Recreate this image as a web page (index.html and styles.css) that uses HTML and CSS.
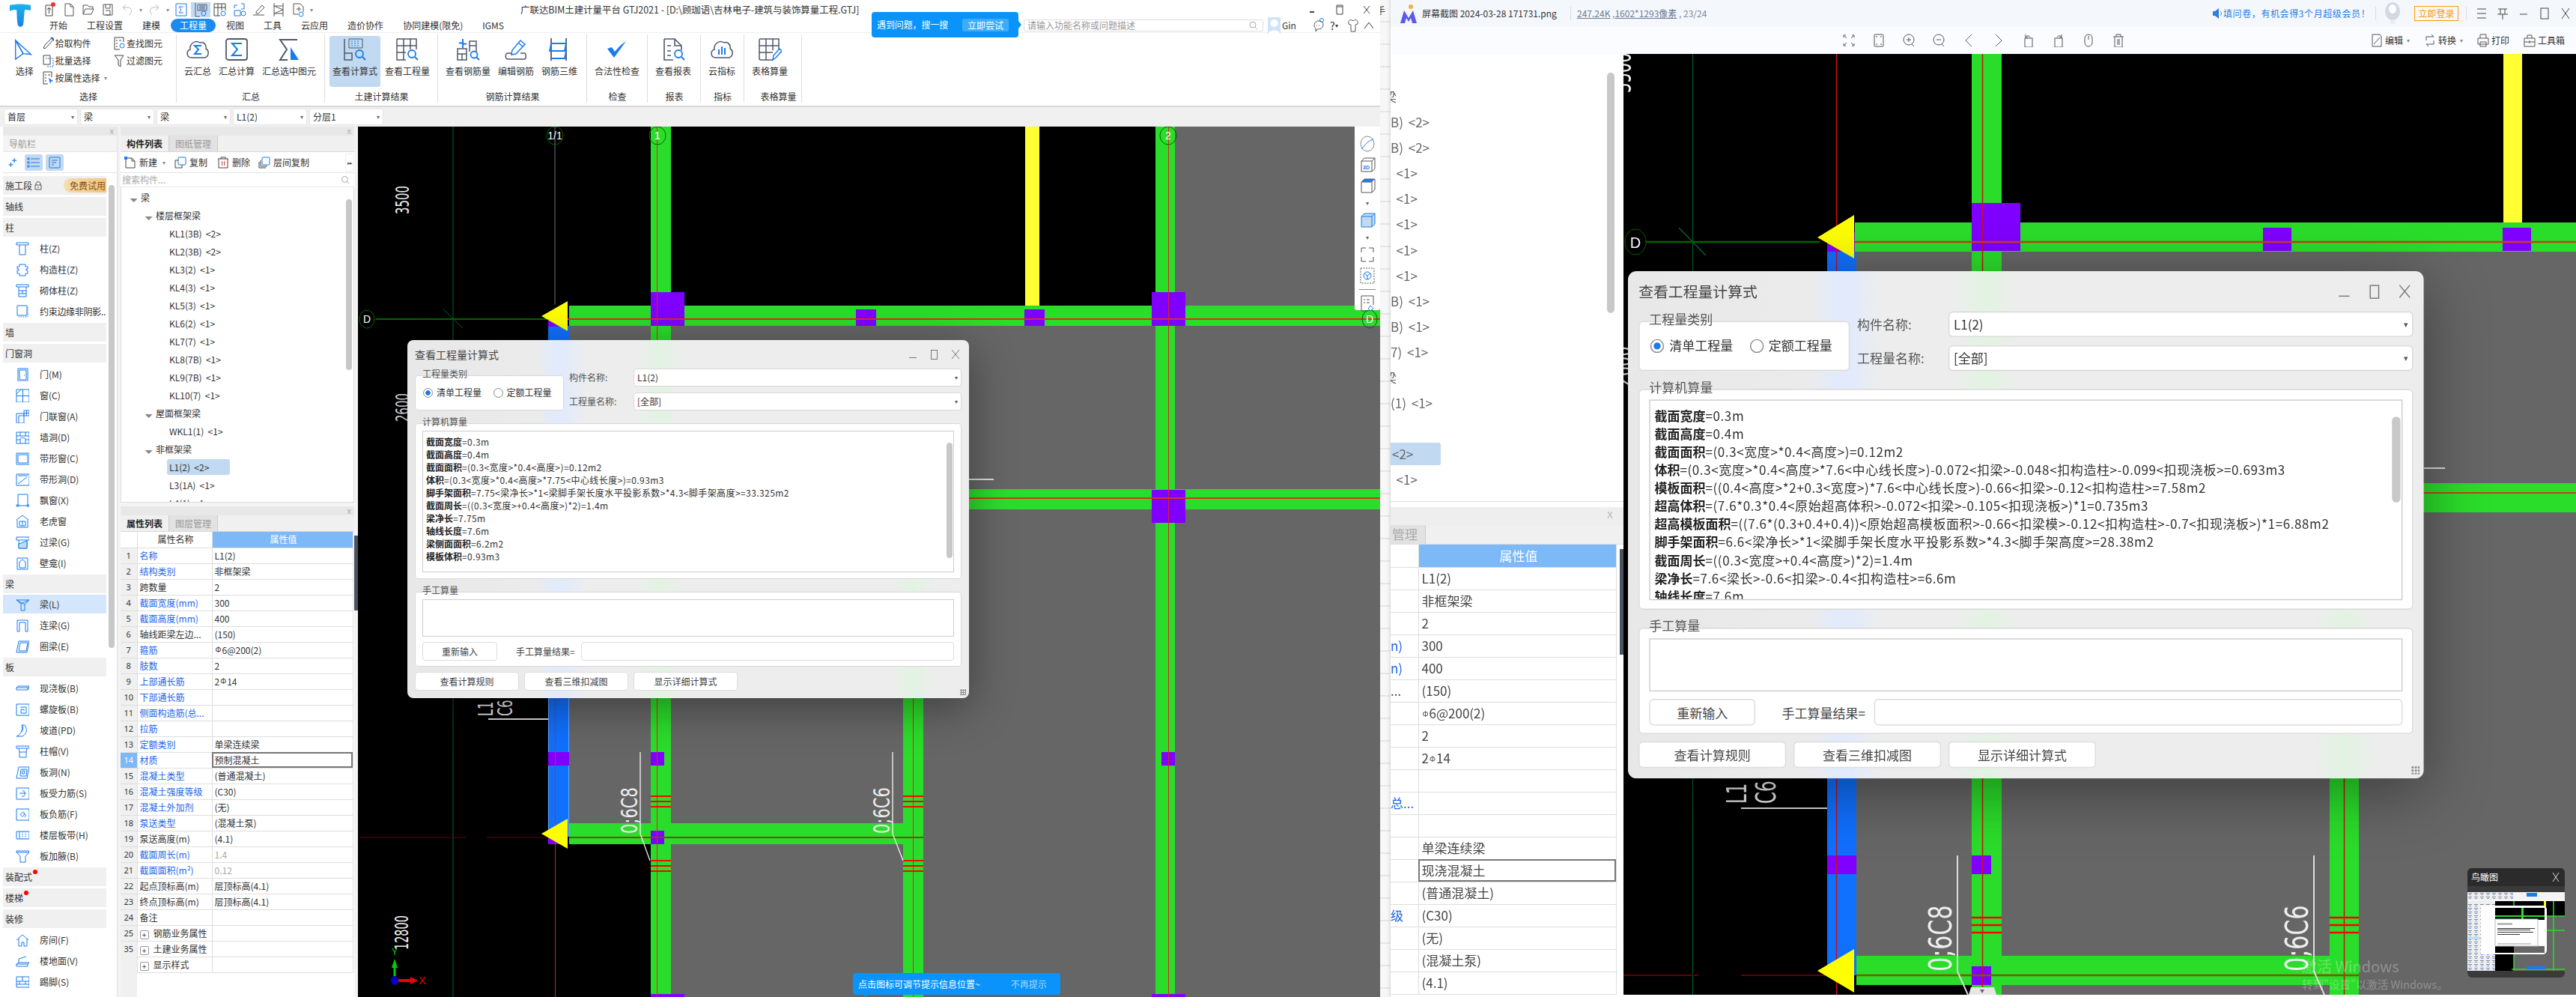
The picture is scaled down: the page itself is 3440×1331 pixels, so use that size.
FILE: index.html
```html
<!DOCTYPE html>
<html lang="zh-CN">
<head>
<meta charset="utf-8">
<title>GTJ2021</title>
<link rel="stylesheet" href="styles.css">
</head>
<body>
<div class="desktop">

<!-- ============ GTJ application window ============ -->
<section class="gtj">
  <header class="head">
    <svg class="logo" viewBox="0 0 30 32"><defs><linearGradient id="lg" x1="0" y1="0" x2="0" y2="1"><stop offset="0" stop-color="#19b4e8"/><stop offset="1" stop-color="#1f7fe8"/></linearGradient></defs><path d="M1 2c9-2 19-2 28 0v7c-4-1-6-1-8-1-1 7-1 14-2 20-1 3-5 4-7 1C10 22 11 15 10 8 7 8 4 8 1 10z" fill="url(#lg)"/></svg>
    <div class="head-right">
      <div class="title-row">
        <div class="quick">
          <svg class="qi" viewBox="0 0 26 20"><path d="M8 4h9v14H8z M12.5 15V8 M10 10l2.500-3 2.500 3" fill="none" stroke="#444"/><circle cx="18" cy="3" r="3" fill="#e33"/></svg>
          <svg class="qi" viewBox="0 0 26 20"><path d="M8 2h7l4 4v12H8z M15 2v4h4" fill="none" stroke="#555"/></svg>
          <svg class="qi" viewBox="0 0 26 20"><path d="M6 16V4h6l2 2h5v3 M6 16l3-7h11l-3 7z" fill="none" stroke="#555"/></svg>
          <svg class="qi" viewBox="0 0 26 20"><path d="M7 3h12v14H7z M10 3v5h6V3 M10 11h6v6h-6" fill="none" stroke="#555"/></svg>
          <svg class="qi" viewBox="0 0 26 20"><path d="M16 17c4-4 3-10-2-10H8 M11 3L7 7l4 4" fill="none" stroke="#bbb"/></svg>
          <i class="qc">▾</i>
          <svg class="qi" viewBox="0 0 26 20"><path d="M10 17C6 13 7 7 12 7h6 M15 3l4 4-4 4" fill="none" stroke="#bbb"/></svg>
          <i class="qc">▾</i>
          <svg class="qi" viewBox="0 0 26 20"><path d="M6 2h14v16H6z M16 6H10l3 4-3 4h6" fill="none" stroke="#1a7bec"/></svg>
          <svg class="qi qon" viewBox="0 0 26 20"><path d="M6 1v18h6 M9 3h12v8H9z M11 5h8 M11 7h8 M11 9h8" fill="none" stroke="#55607a"/><circle cx="17" cy="15" r="3" fill="none" stroke="#1a7bec"/></svg>
          <svg class="qi" viewBox="0 0 26 20"><path d="M5 2h15v9 M5 2v16h8 M5 7h15 M10 2v16 M15 2v9" fill="none" stroke="#444"/><circle cx="17" cy="15" r="3" fill="none" stroke="#1a7bec"/></svg>
          <svg class="qi" viewBox="0 0 26 20"><path d="M6 8V4h4 M6 11h8v7H6z M15 2h4v7h-4" fill="none" stroke="#1a7bec"/><circle cx="18" cy="15" r="3" fill="none" stroke="#1a7bec"/></svg>
          <svg class="qi" viewBox="0 0 26 20"><path d="M5 17h15 M9 13l8-9 3 3-8 8H9z" fill="none" stroke="#555"/></svg>
          <svg class="qi" viewBox="0 0 26 20"><path d="M7 1v18 M19 1v18 M7 5h12 M7 15h12 M7 5l12 5-12 5" fill="none" stroke="#555"/></svg>
          <svg class="qi" viewBox="0 0 26 20"><path d="M7 2h9l4 4v7 M7 2v14h6 M11 9h6 M14 6v6" fill="none" stroke="#555"/><circle cx="17" cy="16" r="3" fill="none" stroke="#1a7bec"/></svg>
          <i class="qc">▾</i>
        </div>
        <div class="app-title">广联达BIM土建计量平台 GTJ2021 - [D:\顾珈语\吉林电子-建筑与装饰算量工程.GTJ]</div>
        <div class="win-btns">
          <span class="wb"><svg viewBox="0 0 14 14" width="14" height="14"><path d="M3 10h6" stroke="#444" stroke-width="2"/></svg></span>
          <span class="wb"><svg viewBox="0 0 14 14" width="14" height="14"><path d="M3 1h8v12H3z M3 3h8" stroke="#444" fill="none"/></svg></span>
          <span class="wb"><svg viewBox="0 0 14 14" width="14" height="14"><path d="M3 2l8 10M11 2l-8 10" stroke="#444" fill="none"/></svg></span>
        </div>
      </div>
      <div class="tab-row">
        <nav class="tabs">
          <span>开始</span><span>工程设置</span><span>建模</span><span class="on">工程量</span><span>视图</span><span>工具</span><span>云应用</span><span>造价协作</span><span>协同建模(限免)</span><span>IGMS</span>
        </nav>
        <div class="help">
          <div class="search"><span>请输入功能名称或问题描述</span><svg viewBox="0 0 12 12" width="12" height="12"><circle cx="5" cy="5" r="4" fill="none" stroke="#aaa"/><path d="M8 8l3 3" stroke="#aaa"/></svg></div>
          <svg class="avatar" viewBox="0 0 17 22"><rect width="17" height="22" fill="#cfe4fb"/><circle cx="8.500" cy="8" r="5" fill="#fff"/><path d="M1 22c1-6 14-6 15 0z" fill="#fff"/></svg>
          <span class="user">Gin</span>
          <svg class="hi first" viewBox="0 0 18 20"><path d="M3 10c0-8 12-8 12-1 0 5-5 6-8 6l-2 3v-4c-1-1-2-2-2-4z M6 10h1 M9 10h1" fill="none" stroke="#555"/><circle cx="13" cy="3" r="2.500" fill="none" stroke="#1a7bec"/></svg>
          <span class="qm">?<i>▾</i></span>
          <svg class="hi" viewBox="0 0 18 20"><path d="M6 2C4 3 2 4 3 8l3 1v9h6V9l3-1c1-4-1-5-3-6-1 2-5 2-6 0z" fill="none" stroke="#555"/></svg>
          <svg class="hi" viewBox="0 0 18 20"><path d="M3 14l6-8 6 8" fill="none" stroke="#333"/></svg>
        </div>
      </div>
    </div>
    <div class="try-tip"><span>遇到问题，搜一搜</span><b>立即尝试</b></div>
  </header>

  <section class="ribbon">
    <div class="rg g1">
      <div class="rg-body">
        <div class="big-sel">
          <svg class="ric" viewBox="0 0 24 30"><path d="M1 2l22 20-11-1z" fill="none" stroke="#1a7bec" stroke-width="1.500"/><path d="M1 2v27l11-8z" fill="none" stroke="#1a7bec" stroke-width="1.500"/></svg>
          <span class="lab">选择</span>
        </div>
        <div class="small-col">
          <div class="sm"><svg viewBox="0 0 16 18"><path d="M14 1l2 2-9 10-3 3-2-1 2-4z" fill="none" stroke="#444"/><path d="M12 1l4 4" stroke="#1a7bec" stroke-width="2"/></svg><span>拾取构件</span></div>
          <div class="sm"><svg viewBox="0 0 16 18"><path d="M2 2h9v12H2z" fill="none" stroke="#444"/><path d="M5 6h10v11H7" fill="none" stroke="#1a7bec" stroke-dasharray="2 1"/></svg><span>批量选择</span></div>
          <div class="sm"><svg viewBox="0 0 16 18"><path d="M2 1h11v7 M2 1v16h6 M4 5h2 M8 5h3 M4 9h2 M4 13h2" fill="none" stroke="#444"/><path d="M9 9l6 4-3 1-1 3z" fill="#1a7bec"/></svg><span>按属性选择</span><i class="cr">▾</i></div>
        </div>
        <div class="small-col second">
          <div class="sm"><svg viewBox="0 0 16 18"><path d="M1 1h12v6 M1 1v16h7 M3 5h2 M7 5h3 M3 9h2 M3 13h2" fill="none" stroke="#444"/><circle cx="11" cy="12" r="3" fill="none" stroke="#1a7bec"/></svg><span>查找图元</span></div>
          <div class="sm"><svg viewBox="0 0 16 18"><path d="M1 2h12L9 8v9L6 15V8z" fill="none" stroke="#444"/></svg><span>过滤图元</span></div>
        </div>
      </div>
      <div class="rg-lab">选择</div>
    </div>

    <div class="rg g2">
      <div class="rg-body tall">
        <div class="rb"><svg class="ric" viewBox="0 0 32 30"><path d="M8 26C1 26 0 17 6 15 5 7 13 2 19 6c5-2 9 3 8 8 5 3 4 12-3 12z" fill="none" stroke="#50586a" stroke-width="1.500"/><path d="M21 10h-9l5 5-5 6h9" fill="none" stroke="#1a7bec" stroke-width="2"/></svg><span class="lab">云汇总</span></div>
        <div class="rb"><svg class="ric" viewBox="0 0 32 30"><rect x="2" y="1" width="28" height="28" rx="3" fill="none" stroke="#50586a" stroke-width="1.800"/><path d="M23 7H10l7 8-7 8h13" fill="none" stroke="#1a7bec" stroke-width="2"/></svg><span class="lab">汇总计算</span></div>
        <div class="rb"><svg class="ric" viewBox="0 0 32 30"><path d="M27 2H4l9 13-9 14h10" fill="none" stroke="#50586a" stroke-width="2"/><path d="M18 12l11 17H18z" fill="#1a7bec"/></svg><span class="lab">汇总选中图元</span></div>
      </div>
      <div class="rg-lab">汇总</div>
    </div>

    <div class="rg g3">
      <div class="rg-body tall">
        <div class="rb sel"><svg class="ric" viewBox="0 0 32 30"><path d="M2 1v28h10v-9H2" fill="none" stroke="#50586a" stroke-width="1.500"/><path d="M8 1h18v12H8z" fill="#c1d9f1" stroke="#50586a"/><path d="M11 4h2M15 4h2M19 4h2M11 7h2M15 7h2M19 7h2M11 10h2M15 10h2M19 10h2" stroke="#1a7bec"/><circle cx="22" cy="21" r="5" fill="none" stroke="#1a7bec" stroke-width="1.800"/><path d="M26 25l4 4" stroke="#1a7bec" stroke-width="2"/></svg><span class="lab">查看计算式</span></div>
        <div class="rb"><svg class="ric" viewBox="0 0 32 30"><path d="M2 1h26v14 M2 1v28h12 M2 10h26 M2 19h12 M11 1v28 M20 1v14" fill="none" stroke="#50586a" stroke-width="1.500"/><circle cx="22" cy="21" r="5" fill="none" stroke="#1a7bec" stroke-width="1.800"/><path d="M26 25l4 4" stroke="#1a7bec" stroke-width="2"/></svg><span class="lab">查看工程量</span></div>
      </div>
      <div class="rg-lab">土建计算结果</div>
    </div>

    <div class="rg g4">
      <div class="rg-body tall">
        <div class="rb"><svg class="ric" viewBox="0 0 32 30"><path d="M18 18V4h9v14 M18 10h9 M2 14v15h12V14z M2 21h12 M8 21v8" fill="none" stroke="#50586a" stroke-width="1.500"/><path d="M9 1v12 M4 7c3-3 7 3 10 0" fill="none" stroke="#1a7bec" stroke-width="2"/><circle cx="24" cy="22" r="4.500" fill="none" stroke="#1a7bec" stroke-width="1.800"/><path d="M27 25l4 4" stroke="#1a7bec" stroke-width="2"/></svg><span class="lab">查看钢筋量</span></div>
        <div class="rb"><svg class="ric" viewBox="0 0 32 30"><path d="M10 20H6c-5 0-5 8 0 8h21c3 0 3-8 0-8h-5" fill="none" stroke="#50586a" stroke-width="1.500"/><path d="M10 22l1-6L22 3l6 5-12 13z M19 6l6 5" fill="none" stroke="#1a7bec" stroke-width="1.500"/></svg><span class="lab">编辑钢筋</span></div>
        <div class="rb"><svg class="ric" viewBox="0 0 32 30"><path d="M5 0v30 M25 0v30" stroke="#50586a" stroke-width="1.800"/><path d="M5 7h20l-2 10H3z M5 17h20l-2 10H5" fill="none" stroke="#1a7bec" stroke-width="1.800"/></svg><span class="lab">钢筋三维</span></div>
      </div>
      <div class="rg-lab">钢筋计算结果</div>
    </div>

    <div class="rg g5">
      <div class="rg-body tall">
        <div class="rb"><svg class="ric" viewBox="0 0 32 30"><path d="M3 14l9 12L28 4c-8 5-12 11-15 14l-4-6z" fill="#1a7bec"/></svg><span class="lab">合法性检查</span></div>
      </div>
      <div class="rg-lab">检查</div>
    </div>

    <div class="rg g6">
      <div class="rg-body tall">
        <div class="rb"><svg class="ric" viewBox="0 0 32 30"><path d="M4 1h14l9 9v6 M18 1v9h9 M4 1v28h12 M8 10h5 M8 17h5 M8 23h5" fill="none" stroke="#50586a" stroke-width="1.600"/><circle cx="23" cy="21" r="5" fill="none" stroke="#1a7bec" stroke-width="1.800"/><path d="M27 25l4 4" stroke="#1a7bec" stroke-width="2"/></svg><span class="lab">查看报表</span></div>
      </div>
      <div class="rg-lab">报表</div>
    </div>

    <div class="rg g7">
      <div class="rg-body tall">
        <div class="rb"><svg class="ric" viewBox="0 0 32 30"><path d="M8 26C1 26 0 17 6 15 5 7 13 2 19 6c5-2 9 3 8 8 5 3 4 12-3 12z" fill="none" stroke="#50586a" stroke-width="1.500"/><path d="M12 15v7 M16 11v11 M20 13v9" stroke="#1a7bec" stroke-width="2"/></svg><span class="lab">云指标</span></div>
      </div>
      <div class="rg-lab">指标</div>
    </div>

    <div class="rg g8">
      <div class="rg-body tall">
        <div class="rb"><svg class="ric" viewBox="0 0 32 30"><path d="M3 1h25v15 M3 1c-1 0-1 1-1 2v24c0 1 1 2 2 2h16 M2 10h26 M2 19h18 M11 1v28 M20 1v15" fill="none" stroke="#50586a" stroke-width="1.500"/><path d="M20 29l1-6 8-9 3 3-8 9z" fill="none" stroke="#1a7bec" stroke-width="1.500"/></svg><span class="lab">表格算量</span></div>
      </div>
      <div class="rg-lab shift">表格算量</div>
    </div>
  </section>

  <div class="combo-row">
    <div class="combo">首层<i>▾</i></div>
    <div class="combo">梁<i>▾</i></div>
    <div class="combo">梁<i>▾</i></div>
    <div class="combo">L1(2)<i>▾</i></div>
    <div class="combo">分层1<i>▾</i></div>
  </div>

  <div class="work">
    <!-- navigation -->
    <aside class="nav">
      <div class="strip"><span>x</span></div>
      <div class="nav-title">导航栏</div>
      <div class="nav-tools">
        <svg class="nt-plus" viewBox="0 0 12 12" width="14" height="14"><path d="M7 1v5M4.500 3.500h5M3 6v5M.5 8.500h5" stroke="#1a7bec" fill="none"/></svg>
        <span class="nt on"><svg viewBox="0 0 18 16" width="18" height="16"><path d="M5 3h12M5 8h12M5 13h12" stroke="#1a7bec"/><rect x="1" y="2" width="2" height="2" fill="none" stroke="#1a7bec"/><rect x="1" y="7" width="2" height="2" fill="none" stroke="#1a7bec"/><rect x="1" y="12" width="2" height="2" fill="none" stroke="#1a7bec"/></svg></span>
        <span class="nt on"><svg viewBox="0 0 18 16" width="18" height="16"><rect x="2" y="1" width="14" height="14" rx="1" fill="none" stroke="#1a7bec"/><path d="M5 5h8M5 8h6M5 11h3" stroke="#1a7bec"/></svg></span>
      </div>
      <div class="nav-list">
        <div class="sec">施工段<svg class="lock" viewBox="0 0 10 12" width="10" height="12"><path d="M2 5V3c0-3 6-3 6 0v2 M1 5h8v6H1z M5 7v2" fill="none" stroke="#555"/></svg><b class="free">免费试用</b></div>
        <div class="sec">轴线</div>
        <div class="sec">柱</div>
        <div class="items">
          <div class="it"><svg viewBox="0 0 18 18"><path d="M1 1h16v3H1z M5 4v13h8V4"/></svg>柱(Z)</div>
          <div class="it"><svg viewBox="0 0 18 18"><path d="M5 2h8v3h3v3h-2v2h2v4h-3v3H5v-3H2v-4h2V8H2V5h3z"/></svg>构造柱(Z)</div>
          <div class="it"><svg viewBox="0 0 18 18"><path d="M1 1h16v3H1z M4 4v13h10V4 M4 9h10 M9 9v4 M4 13h10"/></svg>砌体柱(Z)</div>
          <div class="it"><svg viewBox="0 0 18 18"><path d="M2 1h13v13H2z"/><path d="M16 3v13H4" stroke-dasharray="1.500 1.500"/></svg><span class="clip">约束边缘非阴影..</span></div>
        </div>
        <div class="sec">墙</div>
        <div class="sec">门窗洞</div>
        <div class="items">
          <div class="it"><svg viewBox="0 0 18 18"><path d="M3 1h13v17H3z M5 3h9v13H5z M11 10h1"/></svg>门(M)</div>
          <div class="it"><svg viewBox="0 0 18 18"><path d="M1 1h17v17H1z M9.500 1v17 M1 9.500h17 M1 7l6-6"/></svg>窗(C)</div>
          <div class="it"><svg viewBox="0 0 18 18"><path d="M1 5h10v13H1z M4 18V8h7 M11 1h7v7h-7z M14.500 1v7 M11 4.500h7"/></svg>门联窗(A)</div>
          <div class="it"><svg viewBox="0 0 18 18"><path d="M1 2h17v15H1z M1 7h17 M6 2v5 M13 2v5 M1 12h5 M13 12h5 M6 17v-6c0-2 7-2 7 0v6"/></svg>墙洞(D)</div>
          <div class="it"><svg viewBox="0 0 18 18"><path d="M1 2h17v15H1z M3 4h13v11H3z"/></svg>带形窗(C)</div>
          <div class="it"><svg viewBox="0 0 18 18"><path d="M1 2h17v15H1z M3 15L15 6 M3 4h13"/></svg>带形洞(D)</div>
          <div class="it"><svg viewBox="0 0 18 18"><path d="M3 1h13v15H3z M1 15h3v2H1z M15 15h3v2h-3z"/></svg>飘窗(X)</div>
          <div class="it"><svg viewBox="0 0 18 18"><path d="M1 7l8-6 8 6 M2 7v10h14V7 M5 9h8v6H5z M9 9v6"/></svg>老虎窗</div>
          <div class="it"><svg viewBox="0 0 18 18"><path d="M1 2h17v4H1z M4 6v11h11V6"/><path d="M4 11l11-4v10H4z" class="tint"/></svg>过梁(G)</div>
          <div class="it"><svg viewBox="0 0 18 18"><path d="M2 2h14v15H2z M5 15V7l4-3 4 3v8z"/></svg>壁龛(I)</div>
        </div>
        <div class="sec">梁</div>
        <div class="items">
          <div class="it sel"><svg viewBox="0 0 18 18"><path d="M1 3h17l-6 6v8H7V8z M1 3l11 6 M18 3L7 8"/></svg>梁(L)</div>
          <div class="it"><svg viewBox="0 0 18 18"><path d="M2 17V2h14v15h-3V5H5v12z"/></svg>连梁(G)</div>
          <div class="it"><svg viewBox="0 0 18 18"><path d="M4 2h14l-3 15H1z M6 4h10l-2 11H4z"/></svg>圈梁(E)</div>
        </div>
        <div class="sec">板</div>
        <div class="items">
          <div class="it"><svg viewBox="0 0 18 18"><path d="M1 8l2-2h15v3l-2 2H1z M1 8h15v3 M16 8l2-2"/></svg>现浇板(B)</div>
          <div class="it"><svg viewBox="0 0 18 18"><path d="M1 2h17v15H1z M6 6h8v8H7V9h4v2"/></svg>螺旋板(B)</div>
          <div class="it"><svg viewBox="0 0 18 18"><path d="M1 17c6-2 9-9 7-15h4c4 6 3 11-3 15z M8 2c3 1 2 6 0 9"/></svg>坡道(PD)</div>
          <div class="it"><svg viewBox="0 0 18 18"><path d="M1 2h17v3H1z M4 5l1 5h9l1-5 M5 10v7h9v-7"/></svg>柱帽(V)</div>
          <div class="it"><svg viewBox="0 0 18 18"><path d="M4 2h14l-3 15H1z M7 5h8l-1 9H6z M9 7h3l-.5 4h-3z"/></svg>板洞(N)</div>
          <div class="it"><svg viewBox="0 0 18 18"><path d="M1 2h17v15H1z M5 9h9 M9 6c3-1 4 2 2 3 3 1 1 5-3 4"/></svg>板受力筋(S)</div>
          <div class="it"><svg viewBox="0 0 18 18"><path d="M1 2h17v15H1z M6 10c3-6 6-4 5 0-1 3-4 2-4 0 M11 8c2 0 3 3 1 5"/></svg>板负筋(F)</div>
          <div class="it"><svg viewBox="0 0 18 18"><path d="M1 4h17v10H1z M5 4v10"/><path d="M9 4v10 M13 4v10" stroke-dasharray="1.500 1.500"/></svg>楼层板带(H)</div>
          <div class="it"><svg viewBox="0 0 18 18"><path d="M1 2h17v2l-5 5v8H6V9L1 4z M1 4h17"/></svg>板加腋(B)</div>
        </div>
        <div class="sec">装配式<i class="dot"></i></div>
        <div class="sec">楼梯<i class="dot"></i></div>
        <div class="sec">装修</div>
        <div class="items">
          <div class="it"><svg viewBox="0 0 18 18"><path d="M1 9l8-7 8 7 M4 7v10h4v-5h3v5h4V7"/></svg>房间(F)</div>
          <div class="it"><svg viewBox="0 0 18 18"><path d="M1 13h15l2-2H4z M1 13v3h15v-3 M4 11V6l10-3"/></svg>楼地面(V)</div>
          <div class="it"><svg viewBox="0 0 18 18"><path d="M1 2h17v14H1z M1 8h17 M9 2v6 M5 8v4 M13 8v4 M1 12h17" /></svg>踢脚(S)</div>
        </div>
      </div>
      <i class="nav-scroll"></i>
    </aside>

    <!-- component list + properties -->
    <div class="mid">
      <div class="list-panel">
        <div class="strip"><span>x</span></div>
        <div class="ptabs"><span class="on">构件列表</span><span>图纸管理</span></div>
        <div class="ltools">
          <span class="lt w1"><svg viewBox="0 0 16 16" width="16" height="16"><path d="M2 2h8l4 4v9H2z M10 2v4h4" fill="none" stroke="#444"/><rect x="0" y="0" width="4" height="4" fill="#1a7bec"/></svg>新建<i>▾</i></span>
          <span class="lt w2"><svg viewBox="0 0 16 16" width="16" height="16"><rect x="5" y="1" width="10" height="10" rx="1" fill="none" stroke="#1a7bec"/><path d="M5 5H1v10h9v-4" fill="none" stroke="#444"/></svg>复制</span>
          <span class="lt w3"><svg viewBox="0 0 16 16" width="16" height="16"><path d="M1 3h14 M5 3V1h6v2 M2 3v12h12V3" fill="none" stroke="#444"/><path d="M6.500 6v6M9.500 6v6" stroke="#e33"/></svg>删除</span>
          <span class="lt w4"><svg viewBox="0 0 16 16" width="16" height="16"><rect x="5" y="1" width="10" height="10" rx="1" fill="none" stroke="#1a7bec"/><path d="M3 5v8h9 M1 7v8h9" fill="none" stroke="#444"/></svg>层间复制</span>
          <span class="more">▸▸</span>
        </div>
        <div class="lsearch"><span>搜索构件...</span><svg viewBox="0 0 12 12" width="12" height="12"><circle cx="5.500" cy="5.500" r="4" fill="none" stroke="#aaa"/><path d="M8 8l3 3" stroke="#aaa"/></svg></div>
        <div class="tree">
          <div class="tr l0"><i>◢</i>梁</div>
          <div class="tr l1"><i>◢</i>楼层框架梁</div>
          <div class="tr l2">KL1(3B) &nbsp;&lt;2&gt;</div>
          <div class="tr l2">KL2(3B) &nbsp;&lt;2&gt;</div>
          <div class="tr l2">KL3(2) &nbsp;&lt;1&gt;</div>
          <div class="tr l2">KL4(3) &nbsp;&lt;1&gt;</div>
          <div class="tr l2">KL5(3) &nbsp;&lt;1&gt;</div>
          <div class="tr l2">KL6(2) &nbsp;&lt;1&gt;</div>
          <div class="tr l2">KL7(7) &nbsp;&lt;1&gt;</div>
          <div class="tr l2">KL8(7B) &nbsp;&lt;1&gt;</div>
          <div class="tr l2">KL9(7B) &nbsp;&lt;1&gt;</div>
          <div class="tr l2">KL10(7) &nbsp;&lt;1&gt;</div>
          <div class="tr l1"><i>◢</i>屋面框架梁</div>
          <div class="tr l2">WKL1(1) &nbsp;&lt;1&gt;</div>
          <div class="tr l1"><i>◢</i>非框架梁</div>
          <div class="tr l2"><span class="pill">L1(2) &nbsp;&lt;2&gt;</span></div>
          <div class="tr l2">L3(1A) &nbsp;&lt;1&gt;</div>
          <div class="tr l2">L4(1) &nbsp;&lt;1&gt;</div>
          <i class="tree-scroll"></i>
        </div>
      </div>
      <div class="prop-panel">
        <div class="strip"><span>x</span></div>
        <div class="ptabs"><span class="on">属性列表</span><span>图层管理</span></div>
        <table class="props">
          <colgroup><col class="c1"><col class="c2"><col class="c3"></colgroup>
          <tr class="ph"><th></th><th>属性名称</th><th class="pv">属性值</th></tr>
          <tr><td>1</td><td class="bl">名称</td><td>L1(2)</td></tr>
          <tr><td>2</td><td class="bl">结构类别</td><td>非框架梁</td></tr>
          <tr><td>3</td><td>跨数量</td><td>2</td></tr>
          <tr><td>4</td><td class="bl">截面宽度(mm)</td><td>300</td></tr>
          <tr><td>5</td><td class="bl">截面高度(mm)</td><td>400</td></tr>
          <tr><td>6</td><td>轴线距梁左边...</td><td>(150)</td></tr>
          <tr><td>7</td><td class="bl">箍筋</td><td><span class="rb-s">Φ</span>6@200(2)</td></tr>
          <tr><td>8</td><td class="bl">肢数</td><td>2</td></tr>
          <tr><td>9</td><td class="bl">上部通长筋</td><td>2<span class="rb-s">Φ</span>14</td></tr>
          <tr><td>10</td><td class="bl">下部通长筋</td><td></td></tr>
          <tr><td>11</td><td class="bl">侧面构造筋(总...</td><td></td></tr>
          <tr><td>12</td><td class="bl">拉筋</td><td></td></tr>
          <tr><td>13</td><td class="bl">定额类别</td><td>单梁连续梁</td></tr>
          <tr><td class="cur">14</td><td class="bl">材质</td><td class="edit">预制混凝土</td></tr>
          <tr><td>15</td><td class="bl">混凝土类型</td><td>(普通混凝土)</td></tr>
          <tr><td>16</td><td class="bl">混凝土强度等级</td><td>(C30)</td></tr>
          <tr><td>17</td><td class="bl">混凝土外加剂</td><td>(无)</td></tr>
          <tr><td>18</td><td class="bl">泵送类型</td><td>(混凝土泵)</td></tr>
          <tr><td>19</td><td>泵送高度(m)</td><td>(4.1)</td></tr>
          <tr><td>20</td><td class="bl">截面周长(m)</td><td class="gr">1.4</td></tr>
          <tr><td>21</td><td class="bl">截面面积(m²)</td><td class="gr">0.12</td></tr>
          <tr><td>22</td><td>起点顶标高(m)</td><td>层顶标高(4.1)</td></tr>
          <tr><td>23</td><td>终点顶标高(m)</td><td>层顶标高(4.1)</td></tr>
          <tr><td>24</td><td>备注</td><td></td></tr>
          <tr><td>25</td><td><i class="plus">+</i>钢筋业务属性</td><td></td></tr>
          <tr><td>35</td><td><i class="plus">+</i>土建业务属性</td><td></td></tr>
          <tr><td>45</td><td><i class="plus">+</i>显示样式</td><td></td></tr>
        </table>
        <i class="prop-scroll"></i>
      </div>
    </div>

    <!-- CAD canvas -->
    <div class="canvas">
      <svg class="cad" viewBox="478 169 1365 1162">
        <rect x="478" y="169" width="1365" height="1162" fill="#000"/>
        <rect x="1569" y="169" width="274" height="1162" fill="#666"/>
        <rect x="760" y="435" width="810" height="896" fill="#666"/>
        <rect x="760" y="1127" width="109" height="204" fill="#000"/>
        <path d="M605 169v1162" stroke="#063" stroke-width="1"/>
        <path d="M741 169v238" stroke="#777"/>
        <path d="M592 413l26 25" stroke="#063"/>
        <path d="M502 426h228" stroke="#060" stroke-width="2"/>
        <rect x="1369" y="169" width="19" height="239" fill="#ff3"/>
        <rect x="869" y="169" width="27" height="1162" fill="#2bdd2b"/>
        <rect x="1543" y="169" width="26" height="1162" fill="#2bdd2b"/>
        <rect x="1206" y="653" width="27" height="678" fill="#2bdd2b"/>
        <rect x="760" y="408" width="1083" height="27" fill="#2bdd2b"/>
        <rect x="896" y="653" width="947" height="27" fill="#2bdd2b"/>
        <rect x="760" y="1099" width="473" height="28" fill="#2bdd2b"/>
        <rect x="732" y="435" width="28" height="682" fill="#1070ff"/>
        <path d="M732.500 930v187M759.500 930v187" stroke="#6aa8ff"/>
        <g fill="#8000ff">
          <rect x="869" y="390" width="45" height="45"/><rect x="1143" y="413" width="27" height="22"/><rect x="1368" y="413" width="27" height="22"/><rect x="1538" y="390" width="45" height="45"/>
          <rect x="1538" y="654" width="45" height="44"/>
          <rect x="732" y="1004" width="28" height="18"/><rect x="869" y="1004" width="18" height="18"/><rect x="1551" y="1004" width="18" height="18"/>
          <rect x="869" y="1109" width="18" height="18"/><rect x="732" y="1109" width="26" height="18"/>
          <rect x="732" y="426" width="26" height="10"/>
          <rect x="869" y="1327" width="45" height="4"/><rect x="1538" y="1327" width="45" height="4"/>
        </g>
        <g stroke="#d22" stroke-width="1">
          <path d="M877.500 169v1162M1560.500 169v1162M1219.500 930v401M741.500 930v401"/>
        </g>
        <path d="M758 426h1085" stroke="#e02b1c" stroke-width="2"/>
        <path d="M896 665h947" stroke="#d8341a" stroke-width="2"/>
        <path d="M480 1118h143M650 1118h83" stroke="#600" stroke-width="1"/>
        <path d="M760 1118h473" stroke="#7a4b00" stroke-width="2"/>
        <g stroke="#f00" stroke-width="2">
          <path d="M869 1063h27M869 1070h27M869 1077h27M869 1149h27M869 1156h27M869 1163h27"/>
          <path d="M1206 1063h27M1206 1070h27M1206 1077h27M1206 1149h27M1206 1156h27M1206 1163h27"/>
        </g>
        <path d="M758 402L723 422L758 442z" fill="#ff0"/>
        <path d="M758 1093L723 1113L758 1133z" fill="#ff0"/>
        <g stroke="#fff" fill="none" stroke-width="1.200">
          <path d="M855 1004v109l13 36M1192 1004v109l14 36"/>
        </g>
        <path d="M652 960h80" stroke="#ddd" stroke-width="2"/>
        <path d="M1294 640h33" stroke="#ddd" stroke-width="2"/>
        <g class="cad-text">
          <text transform="translate(546 286) rotate(-90) scale(.62 1)" font-size="24">3500</text>
          <text transform="translate(546 563) rotate(-90) scale(.62 1)" font-size="24">2600</text>
          <text transform="translate(545 1268) rotate(-90) scale(.6 1)" font-size="24">12800</text>
          <text transform="translate(851 1113) rotate(-90) scale(.7 1)" font-size="30">0;6C8</text>
          <text transform="translate(1188 1113) rotate(-90) scale(.7 1)" font-size="30">0;6C6</text>
          <text transform="translate(658 956) rotate(-90) scale(.62 1)" font-size="26">L1</text>
          <text transform="translate(684 956) rotate(-90) scale(.62 1)" font-size="26">C6</text>
        </g>
        <g fill="none" stroke="#060">
          <ellipse cx="741" cy="181" rx="11" ry="12"/><ellipse cx="878" cy="181" rx="11" ry="12"/><ellipse cx="1560" cy="181" rx="11" ry="12"/>
          <ellipse cx="490" cy="426" rx="10" ry="12"/><ellipse cx="1829" cy="426" rx="10" ry="12"/>
        </g>
        <g class="axis-text">
          <text x="741" y="186" font-size="14">1/1</text><text x="878" y="186" font-size="14">1</text><text x="1560" y="186" font-size="14">2</text>
          <text x="490" y="431" font-size="14">D</text><text x="1829" y="431" font-size="14">D</text>
        </g>
        <path d="M527 1305v-14" stroke="#0c0" stroke-width="3"/><path d="M527 1280l-4 12h8z" fill="#0c0"/>
        <path d="M527 1309h22" stroke="#e00" stroke-width="4"/><path d="M558 1309l-10-5v10z" fill="#e00"/>
        <ellipse cx="527" cy="1309" rx="5" ry="6" fill="#00c"/>
        <g class="xy"><text x="527" y="1275" fill="#0c0" font-size="12">Y</text><text x="564" y="1314" fill="#e00" font-size="14">X</text></g>
      </svg>

      <div class="side-tools">
        <svg viewBox="0 0 22 22"><ellipse cx="11" cy="11" rx="9" ry="10" fill="none" stroke="#888"/><path d="M3 18C7 13 13 6 19 5" fill="none" stroke="#1a7bec"/></svg>
        <svg viewBox="0 0 22 22"><path d="M3 6l4-4h14v14l-4 4H3z M3 6h14v14 M17 6l4-4" fill="none" stroke="#555"/><text x="5" y="17" class="s3d">3D</text></svg>
        <svg viewBox="0 0 22 22"><path d="M3 6l4-4h14v14l-4 4H3z M3 6h14v14" fill="none" stroke="#555"/><path d="M3 6l4-4h14l-4 4z" fill="#1a7bec"/></svg>
        <i class="st-car">▾</i>
        <svg viewBox="0 0 22 22"><path d="M3 6l4-4h14v14l-4 4H3z" fill="#c1d9f1" stroke="#1a7bec"/><path d="M3 6h14v14 M17 6l4-4" fill="none" stroke="#1a7bec"/></svg>
        <i class="st-car">▾</i>
        <svg viewBox="0 0 22 22"><path d="M3 8V2h6 M13 2h6v6 M3 14v6h6 M13 20h6v-6" fill="none" stroke="#555"/></svg>
        <svg viewBox="0 0 22 22"><rect x="2" y="1" width="18" height="20" fill="none" stroke="#555" stroke-dasharray="2 1.500"/><circle cx="11" cy="11" r="5" fill="none" stroke="#1a7bec"/><path d="M7 8l4 3 4-3M11 11v5" fill="none" stroke="#1a7bec"/></svg>
        <i class="st-sep"></i>
        <svg viewBox="0 0 22 22"><path d="M3 1h16v12 M3 1v20h9 M6 6h2M10 6h4M6 10h2M10 10h4" fill="none" stroke="#555"/><path d="M15 14l4 4-4 3-3-3z" fill="none" stroke="#1a7bec"/></svg>
      </div>

      <div class="dock-tip"><span>点击图标可调节提示信息位置~</span><span class="no">不再提示</span></div>

      <div class="dlg d1">
        <div class="dlg-title"><span>查看工程量计算式</span><div class="dlg-win"><i class="dw-min"></i><i class="dw-max"></i><svg viewBox="0 0 10 14" width="10" height="14"><path d="M0 1l10 12M10 1L0 13" stroke="#777" fill="none"/></svg></div></div>
        <div class="dlg-top">
          <fieldset class="grp g-type">
            <div class="leg">工程量类别</div>
            <div class="radios"><i class="radio on"></i><span>清单工程量</span><i class="radio"></i><span>定额工程量</span></div>
          </fieldset>
          <div class="fields">
            <div class="field"><label>构件名称:</label><div class="sel-box">L1(2)<i>▾</i></div></div>
            <div class="field"><label>工程量名称:</label><div class="sel-box">[全部]<i>▾</i></div></div>
          </div>
        </div>
        <fieldset class="grp g-auto">
          <div class="leg">计算机算量</div>
          <div class="calc">
            <p><b>截面宽度</b>=0.3m</p>
            <p><b>截面高度</b>=0.4m</p>
            <p><b>截面面积</b>=(0.3&lt;宽度&gt;*0.4&lt;高度&gt;)=0.12m2</p>
            <p><b>体积</b>=(0.3&lt;宽度&gt;*0.4&lt;高度&gt;*7.75&lt;中心线长度&gt;)=0.93m3</p>
            <p><b>脚手架面积</b>=7.75&lt;梁净长&gt;*1&lt;梁脚手架长度水平投影系数&gt;*4.3&lt;脚手架高度&gt;=33.325m2</p>
            <p><b>截面周长</b>=((0.3&lt;宽度&gt;+0.4&lt;高度&gt;)*2)=1.4m</p>
            <p><b>梁净长</b>=7.75m</p>
            <p><b>轴线长度</b>=7.6m</p>
            <p><b>梁侧面面积</b>=6.2m2</p>
            <p><b>模板体积</b>=0.93m3</p>
            <i class="calc-scroll s1"></i>
          </div>
        </fieldset>
        <fieldset class="grp g-man">
          <div class="leg">手工算量</div>
          <div class="man-text"></div>
          <div class="man-row"><div class="dbtn re">重新输入</div><span class="man-lab">手工算量结果=</span><div class="man-in"></div></div>
        </fieldset>
        <div class="dlg-foot"><div class="dbtn">查看计算规则</div><div class="dbtn">查看三维扣减图</div><div class="dbtn">显示详细计算式</div></div>
        <i class="grip"></i>
      </div>
    </div>
  </div>
</section>

<!-- sliver of another window -->
<div class="sliver"><span>手</span></div>

<!-- ============ Image viewer window ============ -->
<section class="viewer">
  <header class="v-title">
    <svg class="v-logo" viewBox="0 0 22 26"><circle cx="14" cy="4" r="3" fill="#f9b233"/><path d="M0 26L5 9l6 10 6-10 5 17h-6l-2-7-3 5-3-5-2 7z" fill="#5b5be8"/></svg>
    <span class="v-name">屏幕截图 2024-03-28 171731.png</span>
    <i class="v-sep"></i>
    <span class="v-meta"><u>247.24K</u> ,<u>1602*1293像素</u> , 23/24</span>
    <div class="v-right">
      <svg class="v-spk" viewBox="0 0 16 18" width="16" height="18"><path d="M2 6h3l5-4v14l-5-4H2z" fill="#2a7de1"/><path d="M12 6c2 2 2 4 0 6" fill="none" stroke="#2a7de1"/></svg>
      <span class="v-ad">填问卷，有机会得3个月超级会员！</span>
      <i class="v-sep wide"></i>
      <svg class="v-ava" viewBox="0 0 20 30" width="20" height="30"><ellipse cx="10" cy="12" rx="10" ry="12" fill="#d4d8e4"/><ellipse cx="10" cy="9" rx="5" ry="6" fill="#fff"/><circle cx="10" cy="26" r="3" fill="#e8eaf0"/></svg>
      <span class="v-login">立即登录</span>
      <i class="v-sep nar"></i>
      <svg class="vw" viewBox="0 0 14 18"><path d="M1 3h12M1 9h12M1 15h12" stroke="#444"/></svg>
      <svg class="vw" viewBox="0 0 14 18"><path d="M1 3h12M4 3v7M10 3v7M0 10h14M7 10v7" stroke="#444" fill="none"/></svg>
      <svg class="vw" viewBox="0 0 14 18"><path d="M2 10h10" stroke="#444"/></svg>
      <svg class="vw" viewBox="0 0 14 18"><rect x="2" y="2" width="10" height="14" fill="none" stroke="#444"/></svg>
      <svg class="vw" viewBox="0 0 14 18"><path d="M2 2l10 14M12 2L2 16" stroke="#444" fill="none"/></svg>
    </div>
  </header>
  <div class="v-tools">
    <div class="vt-center">
      <svg viewBox="0 0 18 18"><path d="M2 5V2h3 M13 2h3v3 M2 13v3h3 M16 13v3h-3 M6 6L3 3 M12 6l3-3 M6 12l-3 3 M12 12l3 3"/></svg>
      <svg viewBox="0 0 18 18"><rect x="3" y="1" width="12" height="16" rx="1"/><path d="M5 4h2M11 4h2M5 14h2M11 14h2"/></svg>
      <svg viewBox="0 0 18 18"><circle cx="9" cy="8" r="7"/><path d="M6 8h6M9 5v6M13 14l3 3"/></svg>
      <svg viewBox="0 0 18 18"><circle cx="9" cy="8" r="7"/><path d="M6 8h6M13 14l3 3"/></svg>
      <svg viewBox="0 0 18 18"><path d="M13 1L5 9l8 8"/></svg>
      <svg viewBox="0 0 18 18"><path d="M5 1l8 8-8 8"/></svg>
      <svg viewBox="0 0 18 18"><rect x="4" y="6" width="10" height="12"/><path d="M5 5c1-3 5-3 6 0M5 1v4h3"/></svg>
      <svg viewBox="0 0 18 18"><rect x="4" y="6" width="10" height="12"/><path d="M13 5c-1-3-5-3-6 0M13 1v4h-3"/></svg>
      <svg viewBox="0 0 18 18"><rect x="4" y="1" width="10" height="16" rx="5"/><path d="M9 3v5"/></svg>
      <svg viewBox="0 0 18 18"><path d="M2 4h14M6 4V1h6v3M4 4v14h10V4M8 7v8M10 7v8"/></svg>
    </div>
    <div class="vt-right">
      <span><svg viewBox="0 0 18 18"><path d="M3 1h10l2 3v13H3z M5 14l8-9"/></svg>编辑<i>▾</i></span>
      <span><svg viewBox="0 0 18 18"><path d="M4 9V4h10l-3-3 M14 9v5H4l3 3"/></svg>转换<i>▾</i></span>
      <span><svg viewBox="0 0 18 18"><path d="M5 6V1h8v5 M2 6h14v8H2z M5 11h8v6H5z"/></svg>打印</span>
      <span><svg viewBox="0 0 18 18"><path d="M2 6h14v11H2z M6 6V2h6v4 M2 11h14 M9 9v4"/></svg>工具箱</span>
    </div>
  </div>
  <div class="v-body">
    <div class="v-left">
      <div class="v-tree">
        <div class="vr cut8">梁</div>
        <div class="vr">B) <em>&lt;2&gt;</em></div>
        <div class="vr">B) <em>&lt;2&gt;</em></div>
        <div class="vr cut2">) <em>&lt;1&gt;</em></div>
        <div class="vr cut2">) <em>&lt;1&gt;</em></div>
        <div class="vr cut2">) <em>&lt;1&gt;</em></div>
        <div class="vr cut2">) <em>&lt;1&gt;</em></div>
        <div class="vr cut2">) <em>&lt;1&gt;</em></div>
        <div class="vr">B) <em>&lt;1&gt;</em></div>
        <div class="vr">B) <em>&lt;1&gt;</em></div>
        <div class="vr">7) <em>&lt;1&gt;</em></div>
        <div class="vr cut8">梁</div>
        <div class="vr">(1) <em>&lt;1&gt;</em></div>
        <div class="vr"></div>
        <div class="vr vsel"><span>&lt;2&gt;</span></div>
        <div class="vr cut2">) <em>&lt;1&gt;</em></div>
        <i class="v-tree-scroll"></i>
      </div>
      <div class="v-strip"><span>x</span></div>
      <div class="v-ptab"><span>管理</span></div>
      <table class="v-props">
        <colgroup><col class="vc1"><col class="vc2"></colgroup>
        <tr class="ph"><th></th><th class="pv">属性值</th></tr>
        <tr><td></td><td>L1(2)</td></tr>
        <tr><td></td><td>非框架梁</td></tr>
        <tr><td></td><td>2</td></tr>
        <tr><td class="bl">n)</td><td>300</td></tr>
        <tr><td class="bl">n)</td><td>400</td></tr>
        <tr><td>...</td><td>(150)</td></tr>
        <tr><td></td><td><span class="rb-s">Φ</span>6@200(2)</td></tr>
        <tr><td></td><td>2</td></tr>
        <tr><td></td><td>2<span class="rb-s">Φ</span>14</td></tr>
        <tr><td></td><td></td></tr>
        <tr><td class="bl">总...</td><td></td></tr>
        <tr><td></td><td></td></tr>
        <tr><td></td><td>单梁连续梁</td></tr>
        <tr><td></td><td class="edit">现浇混凝土</td></tr>
        <tr><td></td><td>(普通混凝土)</td></tr>
        <tr><td class="bl">级</td><td>(C30)</td></tr>
        <tr><td></td><td>(无)</td></tr>
        <tr><td></td><td>(混凝土泵)</td></tr>
        <tr><td></td><td>(4.1)</td></tr>
      </table>
      <i class="v-prop-scroll"></i>
    </div>
    <div class="v-canvas">
      <svg class="cad blur" viewBox="2168 72 1272 1256">
        <rect x="2168" y="72" width="1272" height="1256" fill="#000"/>
        <rect x="2479" y="336" width="961" height="992" fill="#666"/>
        <rect x="2479" y="1315" width="154" height="13" fill="#000"/>
        <path d="M2260.500 72v1256" stroke="#063"/>
        <path d="M2242 304l36 37" stroke="#063" stroke-width="1.500"/>
        <path d="M2198 323h232" stroke="#060" stroke-width="2.500"/>
        <rect x="3343" y="72" width="25" height="225" fill="#ff3"/>
        <rect x="2633" y="72" width="40" height="1256" fill="#2bdd2b"/>
        <rect x="3111" y="645" width="39" height="683" fill="#2bdd2b"/>
        <rect x="2477" y="297" width="963" height="39" fill="#2bdd2b"/>
        <rect x="2673" y="645" width="767" height="39" fill="#2bdd2b"/>
        <rect x="2479" y="1276" width="671" height="39" fill="#2bdd2b"/>
        <rect x="2440" y="336" width="39" height="966" fill="#1070ff"/>
        <g fill="#8000ff">
          <rect x="2633" y="271" width="65" height="64"/><rect x="3022" y="304" width="38" height="31"/><rect x="3342" y="304" width="38" height="31"/>
          <rect x="2440" y="310" width="37" height="26"/>
          <rect x="2440" y="1142" width="39" height="25"/><rect x="2633" y="1142" width="26" height="25"/>
          <rect x="2633" y="1290" width="26" height="25"/>
        </g>
        <path d="M2452.500 72v1256" stroke="#c11" stroke-width="1.500"/>
        <path d="M2647.500 72v1256" stroke="#c11" stroke-width="1.500"/>
        <path d="M3130.500 645v683" stroke="#c11" stroke-width="1.500"/>
        <path d="M2477 323h963" stroke="#c2411a" stroke-width="2.500"/>
        <path d="M2673 658h767" stroke="#c2411a" stroke-width="2"/>
        <path d="M2168 1302h100M2325 1302h115" stroke="#600" stroke-width="2"/>
        <path d="M2479 1302h671" stroke="#7a5a00" stroke-width="2.500"/>
        <g stroke="#f00" stroke-width="2.500">
          <path d="M2633 1225h40M2633 1235h40M2633 1245h40M3111 1225h39M3111 1235h39M3111 1245h39"/>
        </g>
        <path d="M2476 287L2427 317L2476 345z" fill="#ff0"/>
        <path d="M2476 1267L2427 1296L2476 1325z" fill="#ff0"/>
        <path d="M2614 1142v155l14 31M3090 1142v155l14 31" stroke="#ddd" stroke-width="2" fill="none"/>
        <path d="M2325 1079h115" stroke="#ddd" stroke-width="2"/>
        <path d="M3237 625h28" stroke="#ddd" stroke-width="2"/>
        <g class="cad-text">
          <text transform="translate(2178 124) rotate(-90) scale(.62 1)" font-size="34">3500</text>
          <text transform="translate(2178 516) rotate(-90) scale(.62 1)" font-size="34">2600</text>
          <text transform="translate(2606 1297) rotate(-90) scale(.7 1)" font-size="43">0;6C8</text>
          <text transform="translate(3082 1297) rotate(-90) scale(.7 1)" font-size="43">0;6C6</text>
          <text transform="translate(2332 1073) rotate(-90) scale(.62 1)" font-size="37">L1</text>
          <text transform="translate(2371 1073) rotate(-90) scale(.62 1)" font-size="37">C6</text>
        </g>
        <ellipse cx="2184" cy="323" rx="14" ry="17" fill="none" stroke="#060"/>
        <g class="axis-text"><text x="2184" y="331" font-size="20">D</text></g>
        <path d="M2629 1328l3-10h31l3 10z" fill="#e6e6e6"/><path d="M2644 1321h6l-3 5z" fill="#666"/>
        <g class="wm">
          <text x="3074" y="1298" font-size="20">激活 Windows</text>
          <text x="3074" y="1320" font-size="14.500">转到"设置"以激活 Windows。</text>
        </g>
      </svg>

      <div class="dlg d2 blur">
        <div class="dlg-title"><span>查看工程量计算式</span><div class="dlg-win"><i class="dw-min"></i><i class="dw-max"></i><svg viewBox="0 0 10 14" width="10" height="14"><path d="M0 1l10 12M10 1L0 13" stroke="#777" fill="none"/></svg></div></div>
        <div class="dlg-top">
          <fieldset class="grp g-type">
            <div class="leg">工程量类别</div>
            <div class="radios"><i class="radio on"></i><span>清单工程量</span><i class="radio"></i><span>定额工程量</span></div>
          </fieldset>
          <div class="fields">
            <div class="field"><label>构件名称:</label><div class="sel-box">L1(2)<i>▾</i></div></div>
            <div class="field"><label>工程量名称:</label><div class="sel-box">[全部]<i>▾</i></div></div>
          </div>
        </div>
        <fieldset class="grp g-auto">
          <div class="leg">计算机算量</div>
          <div class="calc">
            <p><b>截面宽度</b>=0.3m</p>
            <p><b>截面高度</b>=0.4m</p>
            <p><b>截面面积</b>=(0.3&lt;宽度&gt;*0.4&lt;高度&gt;)=0.12m2</p>
            <p><b>体积</b>=(0.3&lt;宽度&gt;*0.4&lt;高度&gt;*7.6&lt;中心线长度&gt;)-0.072&lt;扣梁&gt;-0.048&lt;扣构造柱&gt;-0.099&lt;扣现浇板&gt;=0.693m3</p>
            <p><b>模板面积</b>=((0.4&lt;高度&gt;*2+0.3&lt;宽度&gt;)*7.6&lt;中心线长度&gt;)-0.66&lt;扣梁&gt;-0.12&lt;扣构造柱&gt;=7.58m2</p>
            <p><b>超高体积</b>=(7.6*0.3*0.4&lt;原始超高体积&gt;-0.072&lt;扣梁&gt;-0.105&lt;扣现浇板&gt;)*1=0.735m3</p>
            <p><b>超高模板面积</b>=((7.6*(0.3+0.4+0.4))&lt;原始超高模板面积&gt;-0.66&lt;扣梁模&gt;-0.12&lt;扣构造柱&gt;-0.7&lt;扣现浇板&gt;)*1=6.88m2</p>
            <p><b>脚手架面积</b>=6.6&lt;梁净长&gt;*1&lt;梁脚手架长度水平投影系数&gt;*4.3&lt;脚手架高度&gt;=28.38m2</p>
            <p><b>截面周长</b>=((0.3&lt;宽度&gt;+0.4&lt;高度&gt;)*2)=1.4m</p>
            <p><b>梁净长</b>=7.6&lt;梁长&gt;-0.6&lt;扣梁&gt;-0.4&lt;扣构造柱&gt;=6.6m</p>
            <p><b>轴线长度</b>=7.6m</p>
            <i class="calc-scroll s2"></i>
          </div>
        </fieldset>
        <fieldset class="grp g-man">
          <div class="leg">手工算量</div>
          <div class="man-text"></div>
          <div class="man-row"><div class="dbtn re">重新输入</div><span class="man-lab">手工算量结果=</span><div class="man-in"></div></div>
        </fieldset>
        <div class="dlg-foot"><div class="dbtn">查看计算规则</div><div class="dbtn">查看三维扣减图</div><div class="dbtn">显示详细计算式</div></div>
        <i class="grip"></i>
      </div>

      <div class="bird">
        <div class="bird-head"><span>鸟瞰图</span><svg viewBox="0 0 10 14" width="10" height="14"><path d="M1 1l8 12M9 1L1 13" stroke="#ddd" fill="none"/></svg></div>
        <svg class="bird-map" viewBox="0 0 130 105">
          <defs><pattern id="noise" width="8" height="5" patternUnits="userSpaceOnUse"><rect width="8" height="5" fill="#eee"/><rect x="1" y="1" width="5" height="1" fill="#889"/><rect x="2" y="3" width="3" height="1" fill="#6aa0e8"/></pattern></defs>
          <rect width="130" height="105" fill="#eee"/>
          <rect width="130" height="12" fill="#f4f4f4"/><rect x="79" y="1" width="14" height="5" fill="#1a7bec"/>
          <rect x="1" y="1" width="60" height="9" fill="url(#noise)"/>
          <rect y="14" width="37" height="91" fill="url(#noise)"/>
          <rect x="37" y="12" width="93" height="93" fill="#000"/>
          <rect x="62" y="32" width="68" height="73" fill="#666"/>
          <rect x="37" y="90" width="25" height="15" fill="#000"/>
          <rect x="102" y="12" width="3" height="20" fill="#ff0"/>
          <path d="M62 12v93M115 12v93M37 32h93M62 51h68M59 103h71" stroke="#2bdd2b" stroke-width="1.500"/>
          <path d="M19 19h82a5 5 0 0 1 4 4v55a5 5 0 0 1-4 4H19z" fill="#fff" stroke="#fff"/>
          <path d="M19 19h82a5 5 0 0 1 4 4v55a5 5 0 0 1-4 4H19z" fill="none" stroke="#fff" stroke-width="2"/>
          <rect x="37" y="21" width="66" height="16" fill="#000"/><rect x="72" y="21" width="3" height="16" fill="#2bdd2b"/><rect x="37" y="31" width="66" height="2" fill="#2bdd2b"/>
          <rect x="37" y="72" width="66" height="9" fill="#666"/><rect x="37" y="72" width="25" height="9" fill="#000"/>
          <rect x="37" y="36" width="57" height="36" fill="#fff" stroke="#bbb"/>
          <rect x="40" y="41" width="20" height="3" fill="#bbb"/><rect x="40" y="48" width="50" height="1" fill="#333"/><rect x="40" y="50" width="44" height="1" fill="#333"/><rect x="40" y="53" width="48" height="1" fill="#333"/><rect x="40" y="56" width="30" height="1" fill="#333"/><rect x="40" y="68" width="45" height="2" fill="#ccc"/>
          <rect x="1" y="60" width="18" height="3" fill="#c1d9f1"/>
          <rect x="79" y="99" width="25" height="4" fill="#1a7bec"/>
        </svg>
      </div>
    </div>
  </div>
</section>
</div>
</body>
</html>
```

FILE: styles.css
```css
* { box-sizing: border-box; }
html, body { margin: 0; padding: 0; }
body { font: 12px/16px "Noto Sans CJK SC", "Noto Sans", sans-serif; color: #333; background: #fff; overflow: hidden; }
i { font-style: normal; }
.desktop { display: flex; width: 3440px; height: 1331px; overflow: hidden; }

/* ---- GTJ ---- */
.gtj { width: 1843px; height: 1331px; display: flex; flex-direction: column; position: relative; background: #fff; }
.head { height: 44px; display: flex; position: relative; border-bottom: 1px solid #eee; }
.logo { width: 30px; height: 32px; margin: 5px 10px 0 12px; flex: none; }
.head-right { flex: 1; display: flex; flex-direction: column; min-width: 0; }
.title-row { height: 25px; display: flex; align-items: center; }
.quick { display: flex; align-items: center; width: 643px; padding-left: 1px; flex: none; }
.qi { width: 26px; height: 20px; flex: none; }
.qon { background: #c1d9f1; }
.qc { width: 10px; font-size: 8px; color: #888; text-align: center; flex: none; }
.app-title { font-size: 12.450px; white-space: nowrap; color: #333; width: 449px; }
.win-btns { margin-left: auto; display: flex; }
.wb { width: 36px; display: flex; justify-content: center; }
.tab-row { height: 18px; display: flex; align-items: center; }
.tabs { display: flex; gap: 26px; padding-left: 14px; white-space: nowrap; }
.tabs .on { background: #1a8cf0; color: #fff; padding: 1px 12px; margin: -1px -12px; border-radius: 10px; }
.help { margin-left: auto; display: flex; align-items: center; height: 18px; }
.search { width: 320px; height: 16px; border: 1px solid #ddd; border-radius: 2px; display: flex; align-items: center; justify-content: space-between; padding: 0 6px 0 4px; color: #999; }
.avatar { width: 17px; height: 22px; margin-left: 6px; flex: none; }
.user { width: 48px; padding-left: 2px; flex: none; }
.hi { width: 18px; height: 20px; flex: none; }
.hi.first { margin-left: -6px; }
.qm { width: 28px; padding-left: 6px; font-size: 14px; flex: none; }
.qm i { font-size: 8px; vertical-align: top; }
.hi + .hi { margin-left: 3px; margin-right: 6px; }
.try-tip { position: absolute; left: 1164px; top: 16px; width: 196px; height: 34px; background: #0a93fb; border-radius: 4px; color: #fff; display: flex; align-items: center; padding-left: 7px; z-index: 3; }
.try-tip::after { content: ""; position: absolute; right: -4px; top: 12px; border-left: 4px solid #0a93fb; border-top: 5px solid transparent; border-bottom: 5px solid transparent; }
.try-tip b { font-weight: 400; background: #3badfc; margin-left: 18px; padding: 1px 7px; border-radius: 2px; line-height: 15px; }
.try-tip span { white-space: nowrap; width: 96px; letter-spacing: -.1px; }

/* ribbon */
.ribbon { height: 99px; display: flex; border-bottom: 2px solid #d9d9d9; flex: none; }
.rg { flex: none; display: flex; flex-direction: column; height: 97px; padding-top: 4px; position: relative; }
.rg::after { content: ""; position: absolute; right: 0; top: 2px; bottom: 4px; width: 1px; background: #ddd; }
.g1 { width: 236px; } .g2 { width: 198px; } .g3 { width: 151px; } .g4 { width: 199px; }
.g5 { width: 81px; } .g6 { width: 71px; } .g7 { width: 58px; } .g8 { width: 77px; }
.rg-body { flex: 1; display: flex; padding: 0 5px; position: relative; }
.rg-lab { height: 20px; text-align: center; line-height: 16px; }
.rg-lab.shift { padding-left: 14px; }
.rb { display: flex; flex-direction: column; align-items: center; padding: 3px 5px 0; white-space: nowrap; height: 68px; border-radius: 3px; }
.rb.sel { background: #c1d9f1; padding-left: 4px; padding-right: 4px; margin: 0 1px; }
.ric { width: 32px; height: 30px; flex: none; }
.lab { margin-top: 6px; line-height: 16px; white-space: nowrap; }
.big-sel { width: 42px; margin-left: 7px; padding-top: 4px; display: flex; flex-direction: column; align-items: center; }
.big-sel .ric { width: 24px; height: 28px; margin-right: 4px; }
.big-sel .lab { margin-top: 7px; }
.small-col { width: 97px; margin-left: 3px; padding-top: 2px; display: flex; flex-direction: column; gap: 7px; }
.small-col.second { width: 80px; margin-left: 0; }
.sm { height: 16px; display: flex; align-items: center; white-space: nowrap; gap: 1px; }
.sm svg { width: 16px; height: 18px; flex: none; }
.cr { font-size: 8px; color: #888; margin-left: 5px; }

.combo-row { height: 26px; background: #f0f0f0; display: flex; gap: 3px; padding: 2px 0 2px 5px; flex: none; }
.combo { width: 99px; height: 22px; background: #fff; border: 1px solid #e6e6e6; border-radius: 3px; display: flex; align-items: center; justify-content: space-between; padding: 0 4px; }
.combo i { font-size: 8px; color: #666; }

/* work area */
.work { flex: 1; display: flex; min-height: 0; background: #f0f0f0; }
.nav { width: 158px; padding-left: 4px; position: relative; flex: none; overflow: hidden; border-right: 2px solid #e8e8e8; background: #fff; }
.strip { height: 12px; background: #e8e8e8; position: relative; color: #aaa; font-size: 11px; line-height: 11px; }
.strip span { position: absolute; right: 4px; top: 0; }
.nav-title { height: 22px; line-height: 22px; padding-left: 8px; color: #999; border-bottom: 1px solid #e4e4e4; background: #f4f4f4; font-size: 12px; }
.nav-tools { height: 28px; display: flex; align-items: center; padding-left: 7px; gap: 4px; border-bottom: 1px solid #e4e4e4; }
.nt-plus { margin-right: 4px; }
.nt { width: 24px; height: 22px; border-radius: 3px; display: flex; align-items: center; justify-content: center; }
.nt.on { background: #c1d9f1; }
.nav-list { padding-top: 4px; width: 138px; }
.sec { height: 25px; background: #f0f0f0; margin-bottom: 3px; padding-left: 3px; line-height: 25px; display: flex; align-items: center; position: relative; white-space: nowrap; }
.lock { margin-left: 3px; }
.free { font-weight: 400; position: absolute; right: 0; top: 3px; height: 19px; line-height: 19px; padding: 0 1px 0 8px; background: linear-gradient(90deg, #f5ddb2, #f1c37a); border-radius: 10px 0 0 10px; color: #884f12; }
.dot { width: 6px; height: 6px; border-radius: 50%; background: #f00; margin: -14px 0 0 1px; }
.items { margin: -1px 0 1px; }
.it { height: 28px; display: flex; align-items: center; padding-left: 17px; white-space: nowrap; overflow: hidden; }
.it svg { width: 18px; height: 18px; margin-right: 14px; flex: none; fill: none; stroke: #1a7bec; }
.it .tint { fill: #c1d9f1; }
.it.sel { background: #d3e6fb; height: 25px; margin: 1px 0 2px; }
.clip { letter-spacing: -.3px; }
.nav-scroll { position: absolute; left: 145px; top: 78px; width: 8px; height: 618px; background: #c8c8c8; border-radius: 4px; }

.mid { width: 320px; padding: 0 5px 0 3px; flex: none; position: relative; display: flex; flex-direction: column; background: #f4f4f4; }
.list-panel { height: 507px; flex: none; display: flex; flex-direction: column; }
.ptabs { height: 22px; display: flex; background: #f0f0f0; border-bottom: 1px solid #d8d8d8; flex: none; }
.ptabs span { width: 65px; text-align: center; line-height: 22px; background: #e2e2e2; color: #999; border-right: 1px solid #ccc; }
.ptabs span.on { background: #f0f0f0; color: #222; font-weight: 700; }
.ltools { height: 28px; background: #fff; display: flex; align-items: center; border-bottom: 1px solid #e6e6e6; position: relative; flex: none; padding-left: 5px; }
.lt { display: flex; align-items: center; gap: 4px; flex: none; white-space: nowrap; }
.lt i { font-size: 8px; color: #888; margin-left: 3px; }
.w1 { width: 67px; } .w2 { width: 57px; } .w3 { width: 55px; }
.more { position: absolute; right: 1px; top: 2px; width: 11px; height: 24px; border: 1px solid #eee; font-size: 7px; color: #555; text-align: center; line-height: 22px; border-radius: 2px; letter-spacing: -1px; }
.lsearch { height: 19px; background: #fff; display: flex; align-items: center; justify-content: space-between; padding: 0 6px 0 2px; color: #aaa; border-bottom: 1px solid #e6e6e6; font-size: 12px; flex: none; }
.tree { height: 421px; background: #fff; overflow: hidden; position: relative; border: 1px solid #ddd; border-top: 0; padding-top: 2px; flex: none; }
.tr { height: 24px; line-height: 24px; white-space: nowrap; }
.tr i { font-size: 7px; color: #888; display: inline-block; width: 10px; margin-right: 3px; transform: rotate(45deg); }
.l0 { padding-left: 13px; } .l1 { padding-left: 33px; } .l2 { padding-left: 64px; }
.tr .pill { background: #c1d9f1; display: inline-block; width: 84px; height: 21px; line-height: 21px; margin-left: -3px; padding-left: 3px; border-radius: 3px; }
.tree-scroll { position: absolute; left: 300px; top: 16px; width: 8px; height: 228px; background: #c8c8c8; border-radius: 4px; }

.prop-panel { flex: 1; position: relative; background: #fff; min-height: 0; }
.props { border-collapse: collapse; table-layout: fixed; width: 310px; font-size: 12px; }
.c1 { width: 22px; } .c2 { width: 100px; } .c3 { width: 188px; }
.props tr, .v-props tr { height: 21px; }
.props td, .props th { border: 1px solid #dedede; border-top: 0; border-left: 0; padding: 0 0 0 3px; line-height: 16px; white-space: nowrap; overflow: hidden; font-weight: 400; }
.props td:first-child { background: #f0f0f0; text-align: center; padding: 0; font-family: "Noto Sans", sans-serif; font-size: 11px; }
.props th:first-child { background: #fff; }
.props th { text-align: center; }
.pv { background: #7db8f7; color: #fff; }
.bl { color: #2266e8; }
.gr { color: #aaa; }
.cur { background: #7db8f7 !important; color: #fff; font-weight: 700; }
.edit { outline: 2px solid #777; outline-offset: -2px; }
.rb-s { font-size: 10px; vertical-align: 2px; margin: 0 1px; }
.plus { display: inline-block; width: 12px; height: 12px; border: 1px solid #999; border-radius: 2px; margin-right: 6px; line-height: 9px; text-align: center; font-size: 10px; color: #333; vertical-align: -1px; }
.prop-panel::before { content: ""; position: absolute; left: 0; top: 599px; bottom: 0; width: 22px; background: #f0f0f0; }
.prop-scroll { position: absolute; right: -5px; top: 39px; width: 5px; height: 100px; background: #4a5360; }

.canvas { flex: 1; position: relative; overflow: hidden; }
.cad { display: block; width: 100%; height: 100%; }
.cad-text text { fill: #eee; font-family: "DejaVu Sans", sans-serif; }
.axis-text text { fill: #fff; text-anchor: middle; font-family: "Liberation Sans", sans-serif; }
.xy text { font-family: "Liberation Sans", sans-serif; text-anchor: middle; }
.s3d { font: 700 7px "Liberation Sans", sans-serif; fill: #1a7bec; }
.side-tools { position: absolute; right: 0; top: 0; width: 34px; height: 245px; background: #fff; display: flex; flex-direction: column; align-items: center; padding-top: 12px; gap: 6px; border-radius: 0 0 3px 3px; }
.side-tools svg { width: 22px; height: 22px; flex: none; }
.st-car { font-size: 8px; line-height: 8px; color: #666; margin: 2px 0; }
.st-sep { width: 22px; height: 1px; background: #888; margin: 1px 0; flex: none; }
.dock-tip { position: absolute; left: 661px; top: 1130px; width: 277px; height: 29px; background: #0a93fb; border-radius: 4px; color: #fff; display: flex; align-items: center; justify-content: space-between; padding: 0 18px 0 7px; white-space: nowrap; }
.dock-tip .no { opacity: .65; }
.dock-tip::after { content: ""; position: absolute; left: 14px; bottom: -3px; border-top: 3px solid #0a93fb; border-left: 3px solid transparent; border-right: 3px solid transparent; }

/* dialog */
.dlg { position: absolute; width: 750px; height: 478px; padding: 0 10px; border-radius: 8px; box-shadow: 0 12px 60px rgba(0,0,0,.4);
  background:
    linear-gradient(90deg, rgba(229,243,229,0) 86%, #e2f3e2 90%, rgba(229,243,229,0) 94%) bottom / 100% 34% no-repeat,
    linear-gradient(90deg, #e8e8e8 0, #ebebeb 23%, #e2eafb 26%, #e2eafb 28%, #ededed 32%, #ededed 41%, #e2f3e2 45%, #ededed 49%, #ededed 100%);
}
.d1 { left: 66px; top: 285px; }
.d2 { left: 6px; top: 290px; transform: scale(1.417); transform-origin: 0 0; }
.dlg-title { height: 38px; display: flex; align-items: center; justify-content: space-between; font-size: 14px; color: #444; }
.dlg-win { display: flex; align-items: center; gap: 19px; padding-right: 3px; }
.dw-min { width: 10px; height: 1px; background: #777; margin-top: 8px; }
.dw-max { width: 9px; height: 13px; border: 1px solid #777; }
.dlg-top { display: flex; height: 56px; }
.grp { position: relative; margin: 0; padding: 0; min-width: 0; border: 1px solid #d8d8d8; border-radius: 4px; background: #fff; }
.leg { position: absolute; left: 9px; top: -11px; line-height: 16px; white-space: nowrap; color: #555; }
.g-type { width: 199px; height: 47px; margin-top: 9px; }
.radios { display: flex; align-items: center; height: 16px; margin-top: 14px; padding-left: 10px; white-space: nowrap; color: #333; }
.radio { width: 13px; height: 13px; border: 1px solid #888; border-radius: 50%; background: #fff; flex: none; margin-right: 5px; }
.radio.on { border-color: #888; background: radial-gradient(circle, #1a7bec 0 3px, #fff 3.500px); }
.radios span { width: 76px; }
.fields { margin-left: 7px; flex: 1; display: flex; flex-direction: column; gap: 8px; }
.field { display: flex; align-items: center; height: 24px; }
.field label { width: 86px; color: #555; }
.sel-box { flex: 1; height: 24px; background: #fff; border: 1px solid #d8d8d8; border-radius: 4px; display: flex; align-items: center; justify-content: space-between; padding: 0 4px; }
.sel-box i { font-size: 8px; color: #555; }
.g-auto { height: 208px; margin-top: 17px; padding: 9px; }
.calc { height: 189px; border: 1px solid #ccc; padding: 5px 4px; overflow: hidden; position: relative; background: #fff; }
.calc p { margin: 0; line-height: 17px; white-space: nowrap; letter-spacing: .42px; color: #333; }
.calc b { color: #222; letter-spacing: 0; }
.calc-scroll { position: absolute; left: 699px; top: 15px; width: 8px; background: #c8c8c8; border-radius: 4px; }
.s1 { height: 154px; } .s2 { height: 81px; }
.g-man { height: 100px; margin-top: 17px; padding: 9px; }
.man-text { height: 50px; border: 1px solid #ccc; }
.man-row { display: flex; align-items: center; height: 25px; margin-top: 7px; }
.dbtn { width: 139px; height: 25px; border: 1px solid #ddd; border-radius: 4px; text-align: center; line-height: 23px; background: #fff; color: #444; flex: none; }
.dbtn.re { width: 100px; }
.man-lab { margin-left: 25px; width: 87px; white-space: nowrap; color: #444; }
.man-in { flex: 1; height: 25px; border: 1px solid #ddd; border-radius: 4px; }
.dlg-foot { display: flex; gap: 7px; margin-top: 7px; }
.grip { position: absolute; right: 4px; bottom: 4px; width: 8px; height: 8px; background: radial-gradient(circle, #888 0 1px, transparent 1.300px) 0 0 / 3px 3px; }

/* sliver */
.sliver { width: 14px; height: 1331px; flex: none; background: repeating-linear-gradient(180deg, #f7f7f7 0, #f7f7f7 28px, #e6e6e6 28px, #e6e6e6 30px); overflow: hidden; padding-top: 6px; box-shadow: inset -4px 0 4px -3px rgba(0,0,0,.15); }
.sliver span { display: block; margin-left: -5px; color: #444; }

/* viewer */
.viewer { width: 1583px; height: 1331px; display: flex; flex-direction: column; background: #fff; flex: none; }
.v-title { height: 36px; background: #f4f8fd; display: flex; align-items: center; padding-left: 13px; flex: none; white-space: nowrap; }
.v-logo { width: 22px; height: 26px; margin-right: 7px; flex: none; }
.v-name { width: 190px; color: #333; }
.v-sep { width: 1px; height: 18px; background: #ddd; margin: 0 8px 0 8px; flex: none; }
.v-meta { color: #7d8ba0; }
.v-meta u { color: #6b7a92; }
.v-right { margin-left: auto; display: flex; align-items: center; }
.v-spk { margin-right: 0; }
.v-ad { width: 181px; color: #2a7de1; letter-spacing: .6px; }
.v-sep.wide { margin: 0 12px 0 22px; }
.v-ava { margin: 0 19px 0 0; }
.v-login { width: 59px; height: 20px; border: 1px solid #f90; color: #f90; text-align: center; line-height: 18px; flex: none; }
.v-sep.nar { margin: 0 6px 0 10px; }
.vw { width: 14px; height: 18px; margin: 0 7px; flex: none; }
.vw + .vw { margin-left: 7px; }
.v-tools { height: 36px; background: #fbfcff; display: flex; align-items: center; position: relative; flex: none; }
.vt-center { margin-left: 603px; display: flex; gap: 22px; }
.vt-center svg, .vt-right svg { width: 18px; height: 18px; fill: none; stroke: #555; flex: none; }
.vt-right { margin-left: auto; display: flex; gap: 18px; padding-right: 15px; white-space: nowrap; }
.vt-right span { display: flex; align-items: center; gap: 2px; }
.vt-right i { font-size: 8px; color: #888; margin-left: 3px; }
.v-body { flex: 1; display: flex; min-height: 0; }
.v-left { width: 311px; flex: none; position: relative; overflow: hidden; filter: blur(.45px); background: #fff; }
.v-tree { height: 598px; padding-top: 40px; position: relative; font-size: 17px; overflow: hidden; border-bottom: 1px solid #ddd; color: #666; }
.vr { height: 34.100px; line-height: 34px; white-space: nowrap; }
.vr em { font-style: normal; margin-left: 3px; display: inline-block; width: 30px; }
.cut2 { margin-left: -5px; } .cut8 { margin-left: -9px; }
.vr.vsel { background: none; }
.vr.vsel span { display: inline-block; width: 67px; height: 30px; line-height: 30px; background: #c1d9f1; padding-left: 2px; border-radius: 0 3px 3px 0; }
.v-tree-scroll { position: absolute; left: 289px; top: 25px; width: 10px; height: 321px; background: #c8c8c8; border-radius: 5px; }
.v-strip { height: 24px; background: #eee; margin-top: 7px; position: relative; color: #bbb; font-size: 16px; line-height: 16px; }
.v-strip span { position: absolute; right: 14px; top: 0; }
.v-ptab { height: 26px; background: #f0f0f0; border-bottom: 1px solid #ddd; }
.v-ptab span { display: block; width: 47px; height: 25px; background: #e2e2e2; border-right: 1px solid #ccc; color: #aaa; font-size: 17px; line-height: 24px; white-space: nowrap; padding-left: 0; text-indent: 2px; }
.v-props { border-collapse: collapse; table-layout: fixed; width: 301px; font-size: 17px; }
.vc1 { width: 37px; } .vc2 { width: 264px; }
.v-props tr { height: 30px; }
.v-props td, .v-props th { border-bottom: 1px solid #dedede; border-right: 1px solid #dedede; padding: 0 0 0 4px; line-height: 24px; font-weight: 400; white-space: nowrap; overflow: hidden; color: #444; }
.v-props td.bl { color: #2266e8; }
.v-props th.pv { color: #fff; background: #7db8f7; text-align: center; }
.v-props td:first-child { padding-left: 0; }
.v-prop-scroll { position: absolute; right: 0; top: 661px; width: 5px; height: 141px; background: #4a5360; }
.v-canvas { flex: 1; position: relative; overflow: hidden; height: 1256px; }
.blur { filter: blur(.45px); }
.wm text { fill: rgba(255,255,255,.28); font-family: "Noto Sans CJK SC", sans-serif; }
.bird { position: absolute; left: 1127px; top: 1087px; width: 130px; height: 146px; background: #3a3a3a; border-radius: 6px; overflow: hidden; display: flex; flex-direction: column; }
.bird-head { height: 24px; background: #2b2b2b; color: #fff; display: flex; align-items: center; justify-content: space-between; padding: 0 7px 0 5px; flex: none; margin-bottom: 8px; }
.bird-map { width: 130px; height: 105px; display: block; flex: none; }
```
